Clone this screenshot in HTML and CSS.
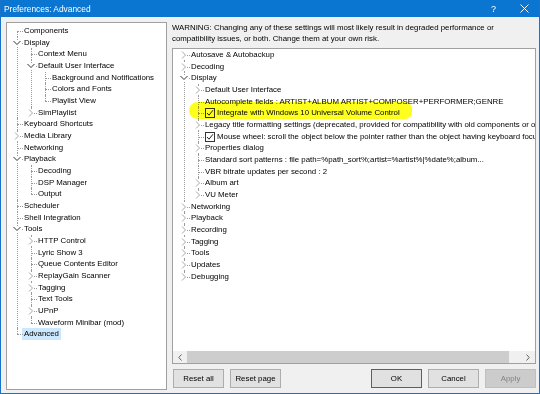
FILE: index.html
```html
<!DOCTYPE html>
<html>
<head>
<meta charset="utf-8">
<title>Preferences: Advanced</title>
<link rel="stylesheet" href="styles.css">
</head>
<body>
<div class="window">
  <div class="titlebar">
    <span class="title">Preferences: Advanced</span>
    <span class="help">?</span>
    <svg class="close" width="9" height="9" viewBox="0 0 9 9"><path d="M0.5 0.5 L8.5 8.5 M8.5 0.5 L0.5 8.5" stroke="#fff" stroke-width="1" fill="none"/></svg>
  </div>
  <div class="content">
    <div class="pages">
      <ul class="tree">
        <li><div class="row"><span class="gut"></span><span class="lbl">Components</span></div></li>
        <li><div class="row"><span class="gut"><svg class="chev" width="8" height="6" viewBox="0 0 8 6"><path d="M0.5 1 L4 4.5 L7.5 1" stroke="#333" fill="none"/></svg></span><span class="lbl">Display</span></div>
          <ul>
            <li><div class="row"><span class="gut"></span><span class="lbl">Context Menu</span></div></li>
            <li><div class="row"><span class="gut"><svg class="chev" width="8" height="6" viewBox="0 0 8 6"><path d="M0.5 1 L4 4.5 L7.5 1" stroke="#333" fill="none"/></svg></span><span class="lbl">Default User Interface</span></div>
              <ul>
                <li><div class="row"><span class="gut"></span><span class="lbl">Background and Notifications</span></div></li>
                <li><div class="row"><span class="gut"></span><span class="lbl">Colors and Fonts</span></div></li>
                <li><div class="row"><span class="gut"></span><span class="lbl">Playlist View</span></div></li>
              </ul>
            </li>
            <li><div class="row"><span class="gut"><svg class="chev" width="6" height="8" viewBox="0 0 6 8"><path d="M1 0.5 L4.5 4 L1 7.5" stroke="#a6a6a6" fill="none"/></svg></span><span class="lbl">SimPlaylist</span></div></li>
          </ul>
        </li>
        <li><div class="row"><span class="gut"></span><span class="lbl">Keyboard Shortcuts</span></div></li>
        <li><div class="row"><span class="gut"><svg class="chev" width="6" height="8" viewBox="0 0 6 8"><path d="M1 0.5 L4.5 4 L1 7.5" stroke="#a6a6a6" fill="none"/></svg></span><span class="lbl">Media Library</span></div></li>
        <li><div class="row"><span class="gut"></span><span class="lbl">Networking</span></div></li>
        <li><div class="row"><span class="gut"><svg class="chev" width="8" height="6" viewBox="0 0 8 6"><path d="M0.5 1 L4 4.5 L7.5 1" stroke="#333" fill="none"/></svg></span><span class="lbl">Playback</span></div>
          <ul>
            <li><div class="row"><span class="gut"></span><span class="lbl">Decoding</span></div></li>
            <li><div class="row"><span class="gut"></span><span class="lbl">DSP Manager</span></div></li>
            <li><div class="row"><span class="gut"></span><span class="lbl">Output</span></div></li>
          </ul>
        </li>
        <li><div class="row"><span class="gut"></span><span class="lbl">Scheduler</span></div></li>
        <li><div class="row"><span class="gut"></span><span class="lbl">Shell Integration</span></div></li>
        <li><div class="row"><span class="gut"><svg class="chev" width="8" height="6" viewBox="0 0 8 6"><path d="M0.5 1 L4 4.5 L7.5 1" stroke="#333" fill="none"/></svg></span><span class="lbl">Tools</span></div>
          <ul>
            <li><div class="row"><span class="gut"><svg class="chev" width="6" height="8" viewBox="0 0 6 8"><path d="M1 0.5 L4.5 4 L1 7.5" stroke="#a6a6a6" fill="none"/></svg></span><span class="lbl">HTTP Control</span></div></li>
            <li><div class="row"><span class="gut"></span><span class="lbl">Lyric Show 3</span></div></li>
            <li><div class="row"><span class="gut"></span><span class="lbl">Queue Contents Editor</span></div></li>
            <li><div class="row"><span class="gut"><svg class="chev" width="6" height="8" viewBox="0 0 6 8"><path d="M1 0.5 L4.5 4 L1 7.5" stroke="#a6a6a6" fill="none"/></svg></span><span class="lbl">ReplayGain Scanner</span></div></li>
            <li><div class="row"><span class="gut"><svg class="chev" width="6" height="8" viewBox="0 0 6 8"><path d="M1 0.5 L4.5 4 L1 7.5" stroke="#a6a6a6" fill="none"/></svg></span><span class="lbl">Tagging</span></div></li>
            <li><div class="row"><span class="gut"></span><span class="lbl">Text Tools</span></div></li>
            <li><div class="row"><span class="gut"><svg class="chev" width="6" height="8" viewBox="0 0 6 8"><path d="M1 0.5 L4.5 4 L1 7.5" stroke="#a6a6a6" fill="none"/></svg></span><span class="lbl">UPnP</span></div></li>
            <li><div class="row"><span class="gut"></span><span class="lbl">Waveform Minibar (mod)</span></div></li>
          </ul>
        </li>
        <li><div class="row"><span class="gut"></span><span class="lbl sel">Advanced</span></div></li>
      </ul>
    </div>
    <div class="main">
      <p class="warning">WARNING: Changing any of these settings will most likely result in degraded performance or compatibility issues, or both. Change them at your own risk.</p>
      <div class="adv">
        <div class="adv-view">
          <ul class="tree">
            <li><div class="row"><span class="gut"><svg class="chev" width="6" height="8" viewBox="0 0 6 8"><path d="M1 0.5 L4.5 4 L1 7.5" stroke="#a6a6a6" fill="none"/></svg></span><span class="lbl">Autosave &amp; Autobackup</span></div></li>
            <li><div class="row"><span class="gut"><svg class="chev" width="6" height="8" viewBox="0 0 6 8"><path d="M1 0.5 L4.5 4 L1 7.5" stroke="#a6a6a6" fill="none"/></svg></span><span class="lbl">Decoding</span></div></li>
            <li><div class="row"><span class="gut"><svg class="chev" width="8" height="6" viewBox="0 0 8 6"><path d="M0.5 1 L4 4.5 L7.5 1" stroke="#333" fill="none"/></svg></span><span class="lbl">Display</span></div>
              <ul>
                <li><div class="row"><span class="gut"><svg class="chev" width="6" height="8" viewBox="0 0 6 8"><path d="M1 0.5 L4.5 4 L1 7.5" stroke="#a6a6a6" fill="none"/></svg></span><span class="lbl">Default User Interface</span></div></li>
                <li><div class="row"><span class="gut"></span><span class="lbl">Autocomplete fields : ARTIST+ALBUM ARTIST+COMPOSER+PERFORMER;GENRE</span></div></li>
                <li><div class="row"><span class="gut"></span><span class="lbl check"><span class="cb"><svg width="8" height="8" viewBox="0 0 8 8"><path d="M1 4 L3 6.2 L7 1.2" stroke="#222" stroke-width="1" fill="none"/></svg></span>Integrate with Windows 10 Universal Volume Control</span></div></li>
                <li><div class="row"><span class="gut"><svg class="chev" width="6" height="8" viewBox="0 0 6 8"><path d="M1 0.5 L4.5 4 L1 7.5" stroke="#a6a6a6" fill="none"/></svg></span><span class="lbl">Legacy title formatting settings (deprecated, provided for compatibility with old components or other software)</span></div></li>
                <li><div class="row"><span class="gut"></span><span class="lbl check"><span class="cb"><svg width="8" height="8" viewBox="0 0 8 8"><path d="M1 4 L3 6.2 L7 1.2" stroke="#222" stroke-width="1" fill="none"/></svg></span>Mouse wheel: scroll the object below the pointer rather than the object having keyboard focus</span></div></li>
                <li><div class="row"><span class="gut"><svg class="chev" width="6" height="8" viewBox="0 0 6 8"><path d="M1 0.5 L4.5 4 L1 7.5" stroke="#a6a6a6" fill="none"/></svg></span><span class="lbl">Properties dialog</span></div></li>
                <li><div class="row"><span class="gut"></span><span class="lbl">Standard sort patterns : file path=%path_sort%;artist=%artist%|%date%;album...</span></div></li>
                <li><div class="row"><span class="gut"></span><span class="lbl">VBR bitrate updates per second : 2</span></div></li>
                <li><div class="row"><span class="gut"><svg class="chev" width="6" height="8" viewBox="0 0 6 8"><path d="M1 0.5 L4.5 4 L1 7.5" stroke="#a6a6a6" fill="none"/></svg></span><span class="lbl">Album art</span></div></li>
                <li><div class="row"><span class="gut"><svg class="chev" width="6" height="8" viewBox="0 0 6 8"><path d="M1 0.5 L4.5 4 L1 7.5" stroke="#a6a6a6" fill="none"/></svg></span><span class="lbl">VU Meter</span></div></li>
              </ul>
            </li>
            <li><div class="row"><span class="gut"><svg class="chev" width="6" height="8" viewBox="0 0 6 8"><path d="M1 0.5 L4.5 4 L1 7.5" stroke="#a6a6a6" fill="none"/></svg></span><span class="lbl">Networking</span></div></li>
            <li><div class="row"><span class="gut"><svg class="chev" width="6" height="8" viewBox="0 0 6 8"><path d="M1 0.5 L4.5 4 L1 7.5" stroke="#a6a6a6" fill="none"/></svg></span><span class="lbl">Playback</span></div></li>
            <li><div class="row"><span class="gut"><svg class="chev" width="6" height="8" viewBox="0 0 6 8"><path d="M1 0.5 L4.5 4 L1 7.5" stroke="#a6a6a6" fill="none"/></svg></span><span class="lbl">Recording</span></div></li>
            <li><div class="row"><span class="gut"><svg class="chev" width="6" height="8" viewBox="0 0 6 8"><path d="M1 0.5 L4.5 4 L1 7.5" stroke="#a6a6a6" fill="none"/></svg></span><span class="lbl">Tagging</span></div></li>
            <li><div class="row"><span class="gut"><svg class="chev" width="6" height="8" viewBox="0 0 6 8"><path d="M1 0.5 L4.5 4 L1 7.5" stroke="#a6a6a6" fill="none"/></svg></span><span class="lbl">Tools</span></div></li>
            <li><div class="row"><span class="gut"><svg class="chev" width="6" height="8" viewBox="0 0 6 8"><path d="M1 0.5 L4.5 4 L1 7.5" stroke="#a6a6a6" fill="none"/></svg></span><span class="lbl">Updates</span></div></li>
            <li><div class="row"><span class="gut"><svg class="chev" width="6" height="8" viewBox="0 0 6 8"><path d="M1 0.5 L4.5 4 L1 7.5" stroke="#a6a6a6" fill="none"/></svg></span><span class="lbl">Debugging</span></div></li>
          </ul>
          <div class="marker"></div>
        </div>
        <div class="hscroll">
          <span class="arrow"><svg width="4" height="7" viewBox="0 0 4 7"><path d="M3.5 0.5 L0.8 3.5 L3.5 6.5" stroke="#606060" fill="none"/></svg></span>
          <span class="thumb"></span>
          <span class="track"></span>
          <span class="arrow"><svg width="4" height="7" viewBox="0 0 4 7"><path d="M0.5 0.5 L3.2 3.5 L0.5 6.5" stroke="#606060" fill="none"/></svg></span>
        </div>
      </div>
      <div class="buttons">
        <button class="btn">Reset all</button>
        <button class="btn">Reset page</button>
        <span class="spacer"></span>
        <button class="btn default">OK</button>
        <button class="btn">Cancel</button>
        <button class="btn disabled">Apply</button>
      </div>
    </div>
  </div>
</div>
</body>
</html>
```
FILE: styles.css
```css
* { box-sizing: border-box; }
html, body { margin: 0; padding: 0; }
body {
  width: 540px;
  height: 394px;
  overflow: hidden;
  background: #f0f0f0;
  font-family: "Liberation Sans", Arial, sans-serif;
  font-size: 7.85px;
  color: #000;
}
.window {
  height: 394px;
  border: 1px solid #1a73c9;
  border-top: 0;
  display: flex;
  flex-direction: column;
}
.titlebar {
  height: 17px;
  flex: none;
  background: #0a76d2;
  color: #fff;
  display: flex;
  align-items: center;
  padding: 0 10px 0 3px;
}
.title { flex: 1; font-size: 8.4px; }
.help { font-size: 9px; margin-right: 24px; }
.close { display: block; }
.content {
  display: flex;
  gap: 5px;
  padding: 5px 3px 0 5px;
}
.pages {
  width: 161px;
  height: 368px;
  flex: none;
  background: #fff;
  border: 1px solid #a0a0a0;
  padding-top: 2px;
  overflow: hidden;
}
.main {
  width: 364px;
  flex: none;
  display: flex;
  flex-direction: column;
}
.warning {
  margin: 0 0 4px;
  padding-top: 1px;
  line-height: 10.5px;
}
.adv {
  height: 316px;
  border: 1px solid #a0a0a0;
  background: #fff;
  display: flex;
  flex-direction: column;
}
.adv-view {
  flex: 1;
  overflow: hidden;
  position: relative;
}
.hscroll {
  height: 12px;
  flex: none;
  display: flex;
  background: #f0f0f0;
}
.arrow {
  width: 14px;
  display: flex;
  align-items: center;
  justify-content: center;
}
.thumb { width: 322px; background: #cdcdcd; }
.track { flex: 1; }
.buttons {
  display: flex;
  gap: 6px;
  margin-top: 5px;
  padding-left: 1px;
}
.spacer { flex: 1; }
.btn {
  width: 51px;
  height: 19px;
  padding: 0;
  border: 1px solid #adadad;
  background: #e1e1e1;
  font-family: inherit;
  font-size: 7.85px;
  color: #000;
}
.btn.default { border-color: #0078d7; }
.btn.disabled { background: #cccccc; border-color: #bfbfbf; color: #838383; }

/* tree view */
.tree, .tree ul { list-style: none; margin: 0; padding: 0; }
.tree { padding-left: 3px; white-space: nowrap; }
.adv .tree { padding-left: 4px; }
.tree li { position: relative; padding-left: 14px; }
.tree li::before {
  content: "";
  position: absolute;
  left: 7px;
  top: 0;
  bottom: 0;
  border-left: 1px dotted #9a9a9a;
}
.tree li:last-child::before { bottom: auto; height: 6px; }
.tree > li:first-child::before { top: 6px; }
.tree li::after {
  content: "";
  position: absolute;
  left: 7px;
  top: 6px;
  width: 6px;
  border-top: 1px dotted #9a9a9a;
}
.row {
  display: flex;
  align-items: center;
  height: 11.68px;
  margin-left: -14px;
}
.gut {
  width: 14px;
  align-self: stretch;
  flex: none;
  display: flex;
  align-items: center;
  justify-content: center;
  position: relative;
  z-index: 1;
}
.chev { display: block; background: #fff; }
.lbl { line-height: 11.68px; }
.lbl.sel { background: #cce8ff; margin-left: -2px; padding: 0 2px; }
.lbl.check { display: flex; align-items: center; }
.cb {
  width: 10px;
  height: 10px;
  border: 1px solid #333;
  background: #fff;
  margin-right: 2px;
  display: flex;
  align-items: center;
  justify-content: center;
}
.cb svg { display: block; }
.marker {
  position: absolute;
  left: 16px;
  top: 53px;
  width: 223px;
  height: 17px;
  background: #ffff1e;
  border-radius: 9px 7px 7px 9px;
  mix-blend-mode: multiply;
  filter: blur(0.6px);
  z-index: 2;
}
```
